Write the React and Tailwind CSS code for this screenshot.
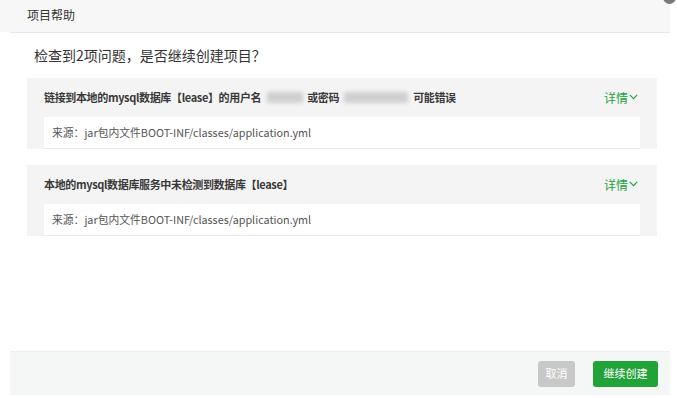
import React from "react";

const font = { fontFamily: '"Noto Sans CJK SC", "Noto Sans", sans-serif' };

function Chevron() {
  return (
    <svg width="9" height="6" viewBox="0 0 9 6" className="ml-[1px] mt-[-2px]">
      <path d="M0.8 0.8 L4.5 4.6 L8.2 0.8" fill="none" stroke="#22a33a" strokeWidth="1.1" />
    </svg>
  );
}

function Card({ title, headerH }) {
  return (
    <div className="ml-[27px] w-[630px] bg-[#f4f4f4] px-[17px]">
      <div className={`flex items-center justify-between ${headerH}`}>
        <div className="text-[11px] font-bold tracking-[-0.35px] text-[#3a3a3a] leading-none">{title}</div>
        <div className="flex items-center pr-[2px] text-[12px] text-[#22a33a] leading-none">
          详情
          <Chevron />
        </div>
      </div>
      <div className="flex h-[32px] items-center bg-white pl-[8px] border-b border-[#e8e8ef] text-[10.8px] text-[#555]">
        来源：jar包内文件BOOT-INF/classes/application.yml
      </div>
    </div>
  );
}

export default function App() {
  return (
    <div className="relative h-[398px] w-[677px] overflow-hidden bg-white" style={font}>
      <div className="absolute left-[663px] top-[-9px] h-[13px] w-[13px] rounded-full bg-[#7a7a7a]" />
      <div className="w-[670px]">
        <div className="flex h-[32px] items-center bg-[#f7f7f7] pl-[27px] pb-[2px] text-[12px] text-[#333]">
          项目帮助
        </div>
        <div className="ml-[10px] h-px bg-[#e6e6e6]" />
        <div className="flex h-[45px] items-center pl-[34px] text-[14px] text-[#333]">
          检查到2项问题，是否继续创建项目？
        </div>
        <Card
          headerH="h-[39px]"
          title={
            <span className="flex items-center">
              链接到本地的mysql数据库【lease】的用户名
              <span className="ml-[6px] mr-[4px] inline-block h-[11px] w-[36px] bg-[#cfcfcf] blur-[2px]" />
              或密码
              <span className="mx-[5px] inline-block h-[11px] w-[64px] bg-[#cfcfcf] blur-[2px]" />
              可能错误
            </span>
          }
        />
        <div className="h-[16px]" />
        <Card headerH="h-[39px]" title="本地的mysql数据库服务中未检测到数据库【lease】" />
        <div className="h-[115px]" />
        <div className="ml-[10px] flex h-[44px] items-center justify-end gap-[18px] border-t border-[#ececec] bg-[#f5f6f6] pr-[12px]">
          <div className="flex h-[26px] w-[37px] items-center justify-center rounded-[3px] bg-[#c8c8c8] text-[11px] text-white">
            取消
          </div>
          <div className="flex h-[26px] w-[65px] items-center justify-center rounded-[3px] bg-[#22a33a] text-[11px] text-white">
            继续创建
          </div>
        </div>
      </div>
    </div>
  );
}
